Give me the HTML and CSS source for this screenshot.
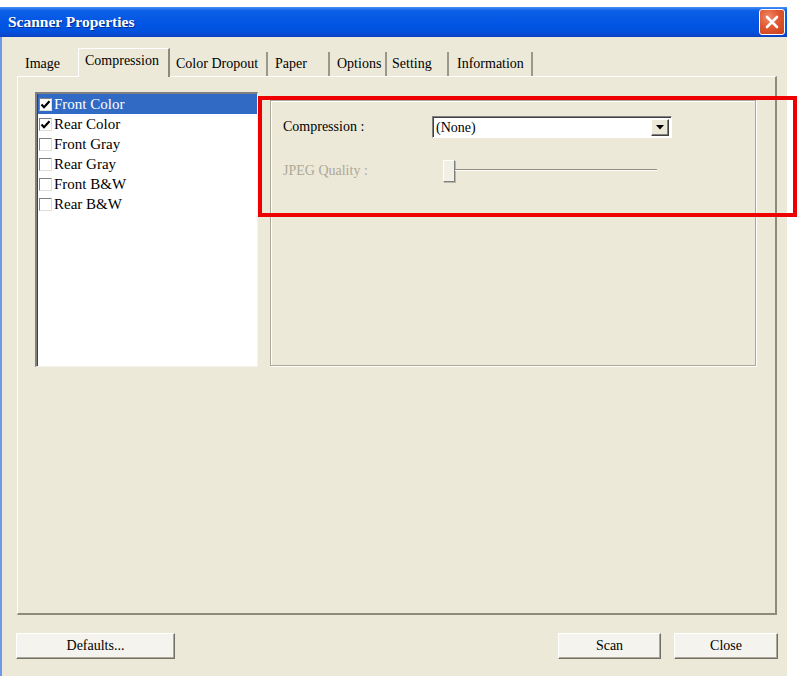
FILE: index.html
```html
<!DOCTYPE html>
<html>
<head>
<meta charset="utf-8">
<title>Scanner Properties</title>
<link rel="stylesheet" href="styles.css">
</head>
<body>
<div class="window">
  <div class="titlebar">
    <span class="title">Scanner Properties</span>
    <span class="close">
      <svg width="14" height="14" viewBox="0 0 14 14"><path d="M2 2 L12 12 M12 2 L2 12" stroke="#fff" stroke-width="2.6" stroke-linecap="round"/></svg>
    </span>
  </div>
  <div class="content">
    <div class="tabs">
      <div class="tab t-image">Image</div>
      <div class="tab active t-comp">Compression</div>
      <div class="tab t-drop">Color Dropout</div>
      <div class="tab t-paper">Paper</div>
      <div class="tab t-opt">Options</div>
      <div class="tab t-set">Setting</div>
      <div class="tab t-info">Information</div>
    </div>
    <div class="panel">
      <div class="list">
        <div class="item sel"><span class="cb"><svg width="11" height="11" viewBox="0 0 11 11"><path d="M1.5 5.5 L4 8.2 L9.5 2.2" fill="none" stroke="#000" stroke-width="2.2"/></svg></span>Front Color</div>
        <div class="item"><span class="cb"><svg width="11" height="11" viewBox="0 0 11 11"><path d="M1.5 5.5 L4 8.2 L9.5 2.2" fill="none" stroke="#000" stroke-width="2.2"/></svg></span>Rear Color</div>
        <div class="item"><span class="cb"></span>Front Gray</div>
        <div class="item"><span class="cb"></span>Rear Gray</div>
        <div class="item"><span class="cb"></span>Front B&amp;W</div>
        <div class="item"><span class="cb"></span>Rear B&amp;W</div>
      </div>
      <div class="group">
        <div class="row">
          <span class="label">Compression :</span>
          <div class="combo">
            <span class="val">(None)</span>
            <span class="drop"><svg width="8" height="5" viewBox="0 0 8 5"><path d="M0 0 H8 L4 4.5 Z" fill="#000"/></svg></span>
          </div>
        </div>
        <div class="row">
          <span class="label disabled">JPEG Quality :</span>
          <div class="slider">
            <span class="thumb"></span>
            <span class="track"></span>
          </div>
        </div>
      </div>
    </div>
    <div class="buttons">
      <button class="btn b-def">Defaults...</button>
      <div class="right">
        <button class="btn b-scan">Scan</button>
        <button class="btn b-close">Close</button>
      </div>
    </div>
  </div>
  <div class="highlight"></div>
</div>
</body>
</html>
```
FILE: styles.css
```css
* { box-sizing: border-box; }
html, body { margin: 0; padding: 0; background: #fff; }
body {
  font-family: "Liberation Serif", "Times New Roman", serif;
  font-size: 14px;
  color: #000;
}
.window {
  position: relative;
  width: 787px;
  height: 669px;
  margin-top: 7px;
  background: #ece9d8;
  display: flex;
  flex-direction: column;
}
.titlebar {
  height: 30px;
  flex: none;
  display: flex;
  align-items: center;
  justify-content: space-between;
  padding: 0 2px 0 8px;
  background: linear-gradient(#4a93f5 0, #2673ee 2px, #0b5fe6 4px, #0457e4 45%, #0052df 80%, #0a48d0 94%, #0a3fb5 100%);
}
.title {
  color: #fff;
  font-weight: bold;
  font-size: 15.5px;
  text-shadow: 1px 1px 0 #0b2a8a;
}
.close {
  width: 26px;
  height: 26px;
  border: 1px solid #fff;
  border-radius: 3px;
  background: radial-gradient(circle at 35% 30%, #f08a6a 0, #e0582f 45%, #c7401b 100%);
  display: flex;
  align-items: center;
  justify-content: center;
}
.content {
  flex: 1;
  border-left: 2px solid #6f97ea;
  padding: 11px 0 0 15px;
  display: flex;
  flex-direction: column;
}
.tabs {
  height: 28px;
  display: flex;
  align-items: flex-end;
  flex: none;
}
.tab {
  height: 24px;
  line-height: 18px;
  padding: 3px 0 0 7px;
  border-right: 2px solid #9a988c;
  white-space: nowrap;
}
.tab.active {
  position: relative;
  z-index: 2;
  height: 29px;
  margin-bottom: -1px;
  padding-top: 3px;
  background: #ece9d8;
  border-top: 1px solid #fff;
  border-left: 1px solid #fff;
  border-right: 2px solid #8d8a7c;
}
.t-image { width: 61px; padding-left: 8px; border-right: none; }
.t-comp { width: 92px; padding-left: 6px; }
.t-drop { width: 98px; padding-left: 6px; }
.t-paper { width: 62px; }
.t-opt { width: 57px; }
.t-set { width: 62px; padding-left: 5px; }
.t-info { width: 84px; padding-left: 8px; }
.panel {
  width: 760px;
  height: 539px;
  flex: none;
  border-top: 1px solid #fff;
  border-left: 1px solid #fff;
  border-right: 2px solid #8d8a7c;
  border-bottom: 2px solid #8d8a7c;
  padding: 15px 0 0 17px;
  display: flex;
  align-items: flex-start;
}
.list {
  width: 223px;
  height: 275px;
  background: #fff;
  border-style: solid;
  border-width: 2px 1px 1px 2px;
  border-color: #808080 #f4f3ee #f4f3ee #808080;
  box-shadow: inset 1px 1px 0 #404040;
  padding: 0 0 0 1px;
}
.item {
  height: 20px;
  display: flex;
  align-items: center;
  font-size: 15px;
  padding-left: 1px;
  white-space: nowrap;
}
.item.sel {
  background: #316ac5;
  color: #fff;
}
.cb {
  width: 13px;
  height: 13px;
  flex: none;
  margin-right: 2px;
  background: #fff;
  border: 1px solid;
  border-color: #808080 #e0ded4 #e0ded4 #808080;
  display: flex;
  align-items: center;
  justify-content: center;
}
.group {
  width: 486px;
  height: 266px;
  margin: 8px 0 0 12px;
  border: 1px solid #aca899;
  box-shadow: 1px 1px 0 #fff, inset 1px 1px 0 #fff;
  padding: 15px 0 0 12px;
  display: flex;
  flex-direction: column;
  gap: 22px;
}
.row {
  height: 22px;
  display: flex;
  align-items: center;
}
.label {
  width: 149px;
  flex: none;
}
.label.disabled { color: #aca899; }
.combo {
  width: 240px;
  height: 22px;
  background: #fff;
  border: 1px solid;
  border-color: #808080 #fff #fff #808080;
  box-shadow: inset 1px 1px 0 #404040;
  display: flex;
  align-items: center;
  justify-content: space-between;
  padding: 2px 2px 1px 3px;
}
.val { padding-top: 1px; }
.drop {
  width: 18px;
  height: 17px;
  background: #ece9d8;
  border: 1px solid;
  border-color: #fff #404040 #404040 #fff;
  box-shadow: inset -1px -1px 0 #808080;
  display: flex;
  align-items: center;
  justify-content: center;
}
.slider {
  width: 214px;
  height: 22px;
  display: flex;
  align-items: center;
  margin-left: 11px;
}
.thumb {
  width: 12px;
  height: 22px;
  flex: none;
  background: #f1efe6;
  border: 1px solid;
  border-color: #fff #808080 #808080 #fff;
  box-shadow: 1px 1px 0 #b9b6a8;
}
.track {
  flex: 1;
  height: 2px;
  border-top: 1px solid #8f8c80;
  border-bottom: 1px solid #fff;
  margin-top: -2px;
}
.buttons {
  margin-top: 18px;
  width: 762px;
  margin-left: -1px;
  display: flex;
  justify-content: space-between;
}
.right { display: flex; gap: 13px; }
.btn {
  font-family: "Liberation Serif", "Times New Roman", serif;
  font-size: 14px;
  color: #000;
  height: 26px;
  padding: 0;
  background: #f4f3ee;
  border: 1px solid;
  border-color: #fff #716f64 #716f64 #fff;
  box-shadow: inset -1px -1px 0 #aca899;
}
.b-def { width: 159px; }
.b-scan { width: 103px; }
.b-close { width: 104px; }
.highlight {
  position: absolute;
  left: 258px;
  top: 89px;
  width: 539px;
  height: 121px;
  border: 4px solid #ee0000;
  pointer-events: none;
}
```
